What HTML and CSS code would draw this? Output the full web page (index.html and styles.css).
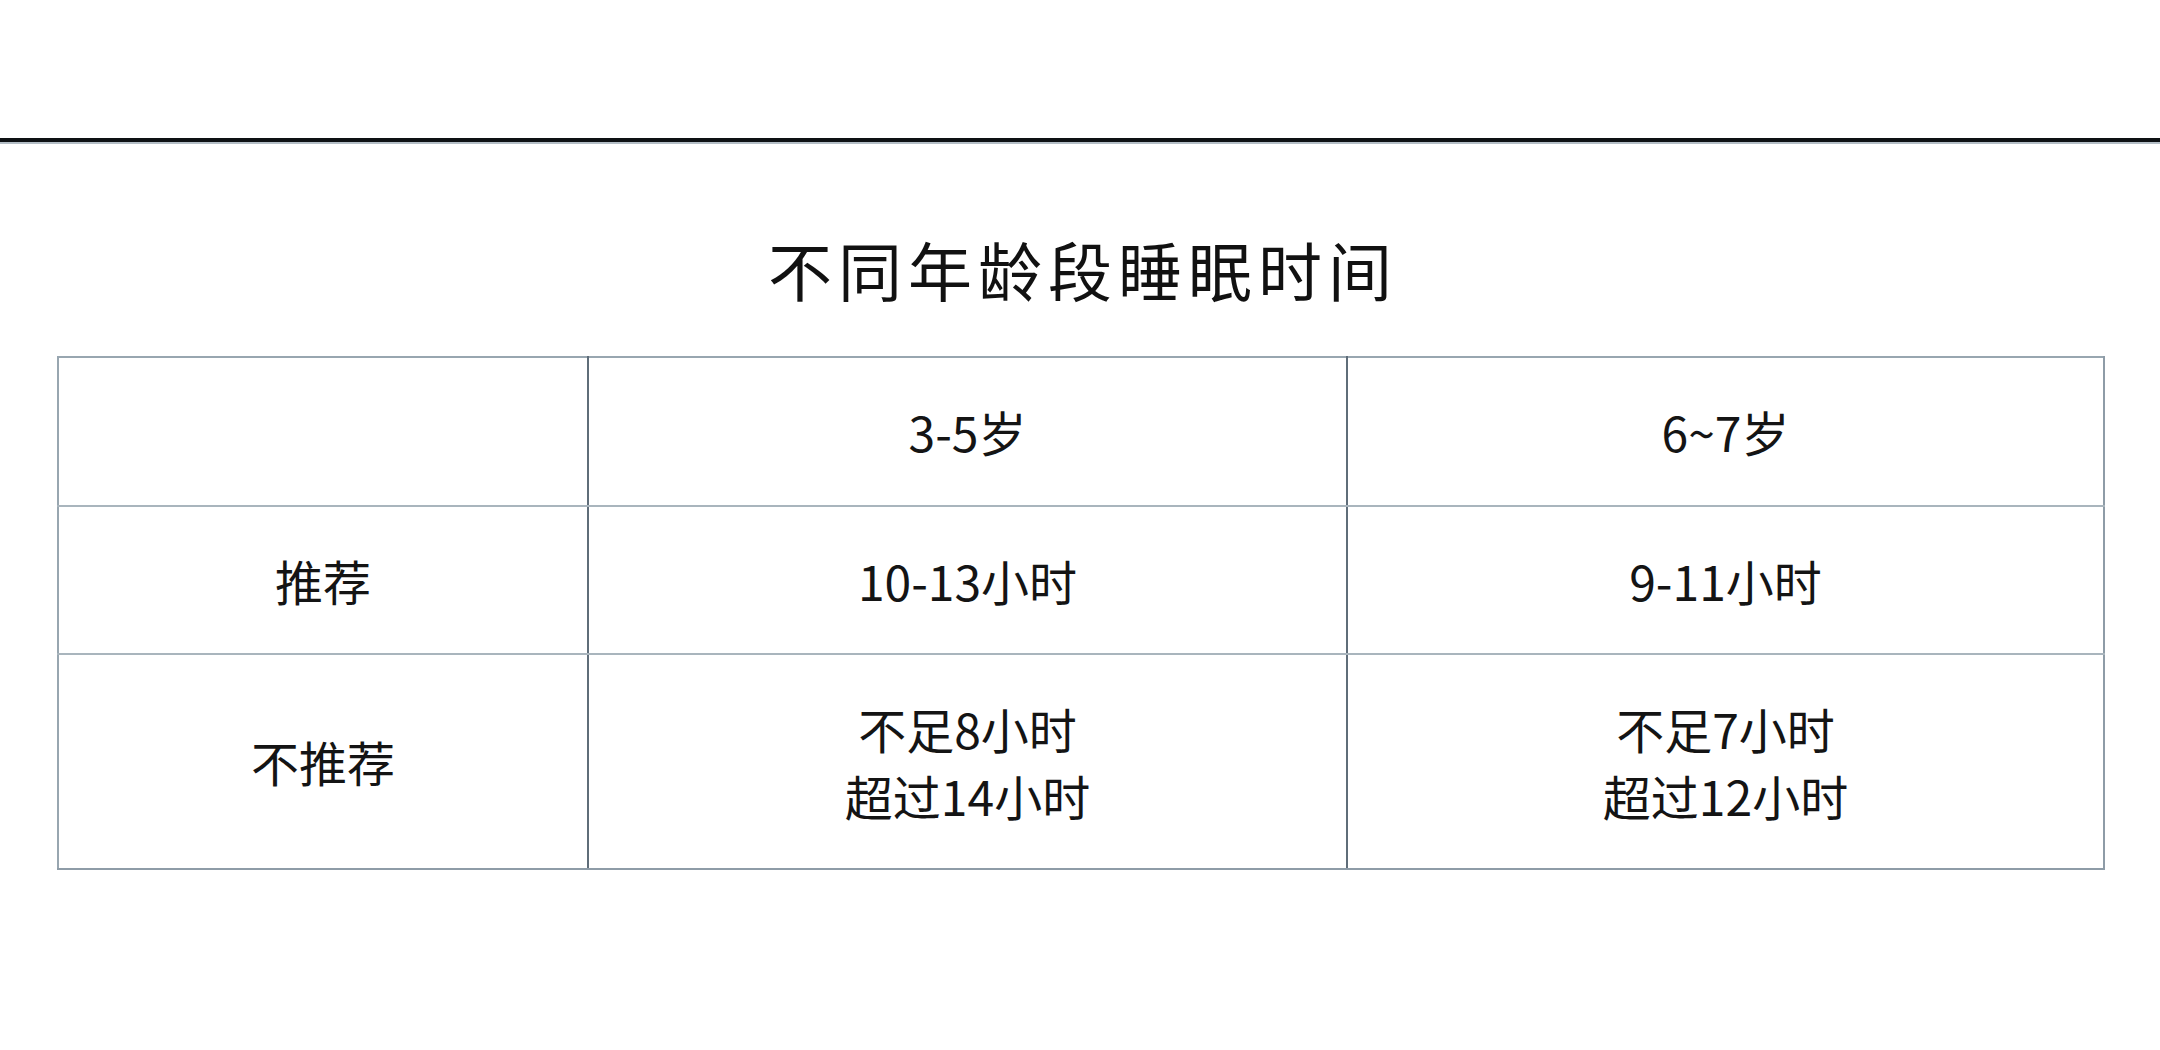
FILE: index.html
```html
<!DOCTYPE html>
<html lang="zh-CN">
<head>
<meta charset="utf-8">
<title>不同年龄段睡眠时间</title>
<link rel="stylesheet" href="styles.css">
</head>
<body>
<div class="topbar"></div>
<h1 class="title">不同年龄段睡眠时间</h1>
<table class="sleep">
  <colgroup>
    <col class="c-label">
    <col class="c-a">
    <col class="c-b">
  </colgroup>
  <tr class="r-head">
    <td class="first"></td>
    <td>3-5岁</td>
    <td>6~7岁</td>
  </tr>
  <tr class="r-rec">
    <td class="first">推荐</td>
    <td>10-13小时</td>
    <td>9-11小时</td>
  </tr>
  <tr class="r-not">
    <td class="first">不推荐</td>
    <td>不足8小时<br>超过14小时</td>
    <td>不足7小时<br>超过12小时</td>
  </tr>
</table>
</body>
</html>
```
FILE: styles.css
```css
html, body {
  margin: 0;
  padding: 0;
  background: #ffffff;
}
body {
  width: 2160px;
  height: 1050px;
  overflow: hidden;
  font-family: "Noto Sans CJK SC", "Noto Sans", sans-serif;
  color: #141414;
}
.topbar {
  height: 138px;
  border-bottom: 4px solid #0e1114;
  box-shadow: 0 2px 0 #b4bec6;
}
.title {
  margin: 86px 0 0 0;
  height: 80px;
  line-height: 80px;
  font-size: 64px;
  font-weight: 400;
  letter-spacing: 6px;
  text-indent: 6px;
  text-align: center;
  color: #111111;
}
.sleep {
  margin: 48px 57px 0 57px;
  width: 2046px;
  border-collapse: collapse;
  table-layout: fixed;
  border: 2px solid #98a6b0;
}
.c-label { width: 530px; }
.c-a { width: 759px; }
.c-b { width: 757px; }
.sleep td {
  text-align: center;
  vertical-align: middle;
  font-size: 48px;
  line-height: 67px;
  padding: 0;
  border-top: 2px solid #a9b5bd;
  border-bottom: 2px solid #a9b5bd;
  border-left: 2px solid #5f6d79;
  border-right: 2px solid #5f6d79;
}
.sleep td.first {
  border-left: 2px solid #98a6b0;
}
.sleep td:last-child {
  border-right: 2px solid #8e9ca7;
}
.r-head td { height: 147px; border-top-color: #98a6b0; }
.r-rec td { height: 146px; }
.r-not td { height: 213px; border-bottom-color: #8e9ca7; }
```
